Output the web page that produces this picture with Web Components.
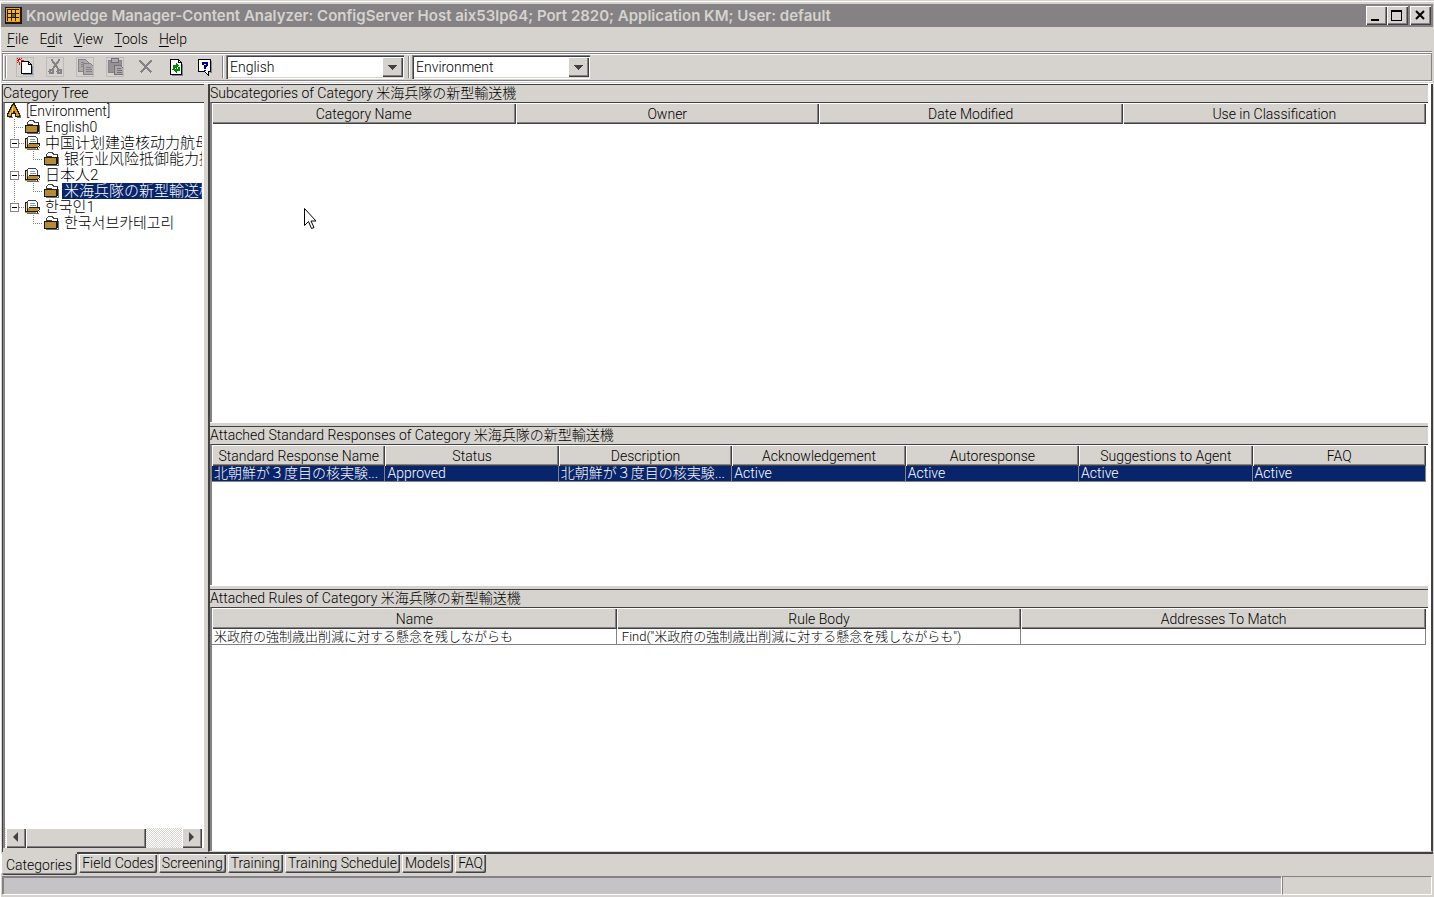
<!DOCTYPE html>
<html lang="en">
<head>
<meta charset="utf-8">
<title>Knowledge Manager-Content Analyzer</title>
<style>
    :root {
        --face: #d6d3ce;
        --light: #ffffff;
        --shadow: #848284;
        --dark: #424142;
        --select: #08246b;
        --raised: inset 1px 1px var(--light), inset -1px -1px var(--dark), inset -2px -2px var(--shadow);
    }
    html, body { height: 100%; }
    body {
        margin: 0;
        background: var(--face);
        color: #000;
        font: 300 14px/16px Roboto, "Noto Sans CJK JP", sans-serif;
        overflow: hidden;
    }
</style>
</head>
<body>
<km-app></km-app>

<script>
class KmTitlebar extends HTMLElement {
    connectedCallback() {
        this.attachShadow({ mode: 'open' });
        this.shadowRoot.innerHTML = `
            <style>
                :host {
                    display: flex;
                    align-items: center;
                    height: 23px;
                    padding: 0 2px 0 4px;
                    background: var(--shadow);
                    color: var(--face);
                }
                h1 {
                    flex: 1;
                    margin: 0 0 0 4px;
                    font: 600 15px/20px Inter, sans-serif;
                    white-space: nowrap;
                    overflow: hidden;
                }
                svg { display: block; }
                button {
                    width: 21px;
                    height: 19px;
                    padding: 0;
                    border: 0;
                    background: var(--face);
                    box-shadow: var(--raised);
                }
                .close { margin-left: 2px; }
            </style>
            <svg width="17" height="17" shape-rendering="crispEdges">
                <rect width="17" height="17" fill="#211800"/>
                <path d="M1.500 1.500h13v13h-13z" fill="none" stroke="#e7a221"/>
                <path d="M3 3h3v3h-3zM7 3h3v3h-3zM11 3h3v3h-3zM3 7h3v3h-3zM11 7h3v3h-3zM3 11h3v3h-3zM7 11h3v3h-3zM11 11h3v3h-3z" fill="#ffb629"/>
                <path d="M7 7h3v3h-3z" fill="#63655a"/>
            </svg>
            <h1><slot></slot></h1>
            <button aria-label="Minimize"><svg width="21" height="19"><path d="M5 13h8v2h-8z"/></svg></button>
            <button aria-label="Maximize"><svg width="21" height="19"><path d="M4 4h11v11h-11zM5 6v8h9v-8z" fill-rule="evenodd"/></svg></button>
            <button aria-label="Close" class="close"><svg width="21" height="19"><path d="M6 5l8 8M14 5l-8 8" stroke="#000" stroke-width="2"/></svg></button>
        `;
    }
}
customElements.define('km-titlebar', KmTitlebar);

class KmMenubar extends HTMLElement {
    connectedCallback() {
        const items = this.getAttribute('items').split(',');
        this.attachShadow({ mode: 'open' });
        this.shadowRoot.innerHTML = `
            <style>
                :host { display: flex; gap: 11px; height: 24px; padding: 0 6px; align-items: center; }
                button { padding: 0; border: 0; background: none; font: inherit; color: inherit; }
                u { text-underline-offset: 2px; }
            </style>
            ${items.map(i => `<button>${i.replace(/_(.)/, '<u>$1</u>')}</button>`).join('')}
        `;
    }
}
customElements.define('km-menubar', KmMenubar);

class KmCombo extends HTMLElement {
    connectedCallback() {
        this.attachShadow({ mode: 'open' });
        this.shadowRoot.innerHTML = `
            <style>
                :host { display: block; position: relative; width: 178px; margin-right: 2px; }
                select {
                    appearance: none;
                    display: block;
                    width: 100%;
                    height: 24px;
                    padding: 0 24px 0 4px;
                    border: 0;
                    border-radius: 0;
                    background: #fff;
                    box-shadow: inset 1px 1px var(--shadow), inset 2px 2px var(--dark), inset -1px -1px #fff, inset -2px -2px var(--face);
                    font: inherit;
                    color: inherit;
                }
                svg {
                    position: absolute;
                    right: 1px;
                    top: 2px;
                    background: var(--face);
                    box-shadow: var(--raised);
                    pointer-events: none;
                }
            </style>
            <select aria-label="${this.getAttribute('label')}"><option>${this.getAttribute('value')}</option></select>
            <svg width="21" height="20" shape-rendering="crispEdges"><path d="M5 8h10l-5 5z" fill="#424142"/></svg>
        `;
    }
}
customElements.define('km-combo', KmCombo);

const TOOLS = [
    ['New', false, `<path d="M5 4h7l3 3v9h-10z" fill="#fff" stroke="#000"/><path d="M12 4v3h3" fill="none" stroke="#000"/><path d="M16 8v9h-10" fill="none" stroke="#7b8aa5"/><path d="M3 0v7M0 3h7M1 1l5 5M5 1l-5 5" stroke="#f00"/><rect x="2" y="2" width="2" height="2" fill="#fff"/>`],
    ['Cut', true, `<path d="M5 2l7 10M13 2l-7 10" stroke="#848284" stroke-width="2"/><circle cx="5" cy="14" r="2" fill="none" stroke="#848284" stroke-width="2"/><circle cx="13" cy="14" r="2" fill="none" stroke="#848284" stroke-width="2"/>`],
    ['Copy', true, `<path d="M2 2h7l3 3v9h-10z" fill="#adaaad" stroke="#848284"/><path d="M7 6h7l3 3v8h-10z" fill="#adaaad" stroke="#848284"/><path d="M4 5h3M4 7h3M4 9h2M9 10h5M9 12h6M9 14h6" stroke="#848284"/>`],
    ['Paste', true, `<path d="M2 3h13v12h-13z" fill="#949294" stroke="#848284"/><path d="M5 1h7v4h-7z" fill="#adaaad" stroke="#737173"/><path d="M8 8h6l3 3v6h-9z" fill="#adaaad" stroke="#737173"/><path d="M10 11h4M10 13h5M10 15h5" stroke="#737173"/>`],
    ['Delete', true, `<path d="M3 3l12 12M15 3l-11 12" stroke="#848284" stroke-width="2"/>`],
    ['Refresh', false, `<path d="M4 2h8l3 3v12h-11z" fill="#fff" stroke="#000"/><path d="M12 2v3h3" fill="none" stroke="#000"/><path d="M5 18h11v-12" fill="none" stroke="#7b8aa5"/><path d="M7 11v-3h2M12 9v3h-2" fill="none" stroke="#008a00" stroke-width="2"/><path d="M9 5l4 3-4 3zM10 9v6l-4-3z" fill="#008a00"/>`],
    ['Help', false, `<path d="M2 2h12v12h-2v4l-4-4h-6z" fill="#fff" stroke="#000"/><path d="M15 3v12h-2" fill="none" stroke="#7b8aa5"/><path d="M6 7v-2h4v3l-2 1v2" fill="none" stroke="#00008c" stroke-width="2"/><rect x="7" y="12" width="2" height="1" fill="#00008c"/>`]
];

class KmToolbar extends HTMLElement {
    connectedCallback() {
        this.attachShadow({ mode: 'open' });
        this.shadowRoot.innerHTML = `
            <style>
                :host {
                    display: flex;
                    align-items: center;
                    height: 26px;
                    margin: 0 1px;
                    border: 1px solid var(--shadow);
                    box-shadow: inset 1px 1px #fff, 0 1px #fff, 0 -1px #fff, 0 -2px var(--shadow);
                }
                i { width: 1px; height: 22px; margin: 0 2px; border-left: 1px solid var(--shadow); background: #fff; }
                button { width: 30px; height: 22px; padding: 0; border: 0; background: none; display: grid; place-items: center; }
                .boxed svg { outline: 1px solid #bdbabd; outline-offset: -1px; }
                .tools { display: flex; padding-left: 1px; }
            </style>
            <i></i>
            <div class="tools">
                ${TOOLS.map(([name, off, art], n) => `<button aria-label="${name}" class="${n < 4 ? 'boxed' : ''}" ${off ? 'disabled' : ''}>
                    <svg width="18" height="20" viewBox="-.5 -.5 18 20" shape-rendering="crispEdges">${art}</svg></button>`).join('')}
            </div>
            <i></i>
            <km-combo label="Language" value="English"></km-combo>
            <i></i>
            <km-combo label="Scope" value="Environment"></km-combo>
        `;
    }
}
customElements.define('km-toolbar', KmToolbar);

const FOLDER = `<path d="M3 5v-2l2-2h4l1 2h4v3z" fill="#fff" stroke="#424142"/><path d="M1 6h12v7h-12z" fill="#b58a39" stroke="#211800"/><path d="M13 5l1-1v8" fill="none" stroke="#211800"/><path d="M2 14h13v-9" fill="none" stroke="#5a6d8c"/>`;
const OPENED = `<path d="M1 3h3v9h-3z" fill="#ffcf9c" stroke="#211800"/><path d="M3 2l1-1h7l2 2v6h-10z" fill="#fff" stroke="#424142"/><path d="M5 4h5M5 6h6" stroke="#6b9ace"/><path d="M4 8h11l-3 5h-11z" fill="#b58a39"/><path d="M4 8h11M15 8v2M14 10v1M13 11v2M1 12h12M3 9v2M2 11v1" stroke="#211800" fill="none"/><path d="M2 14h12M15 12v-1" stroke="#5a6d8c"/>`;
const ROOT = `<path d="M8 0h1v2h1v2h1v2h1v2h1v2h1v3h-4v-3h-1v-2h-1v2h-2v3h-4v-3h1v-2h1v-2h1v-2h1v-2h1z" fill="#de9a10" stroke="#211800"/><path d="M7 3v5M5 8v3" stroke="#ffcf4a"/><path d="M3 14h4M11 14h4v-3" fill="none" stroke="#5a6d8c"/>`;

// depth, open state, language, label
const NODES = [
    [0, 'root', 'en', '[Environment]'],
    [1, 'leaf', 'en', 'English0'],
    [1, 'open', 'zh', '中国计划建造核动力航母'],
    [2, 'leaf', 'zh', '银行业风险抵御能力提'],
    [1, 'open', 'ja', '日本人2'],
    [2, 'leaf', 'ja', '米海兵隊の新型輸送機', true],
    [1, 'last', 'ko', '한국인1'],
    [2, 'end', 'ko', '한국서브카테고리']
];

class KmTree extends HTMLElement {
    cell(body) {
        return `<svg width="19" height="16" shape-rendering="crispEdges">${body}</svg>`;
    }
    guides(depth, kind) {
        const dots = d => `<path d="${d}" stroke="#848284" stroke-dasharray="1 1" fill="none"/>`;
        if (depth === 0) return '';
        if (depth === 2) {
            return this.cell(kind === 'end' ? '' : dots('M9.5 0v16')) + this.cell(dots('M9.5 0v8.5h10'));
        }
        if (kind === 'leaf') return this.cell(dots('M9.5 0v16') + dots('M9 8.5h10'));
        return this.cell(dots(kind === 'last' ? 'M9.5 0v4' : 'M9.5 0v16') + dots('M14 8.5h5') +
            '<path d="M5.5 4.5h8v8h-8z" fill="#fff" stroke="#848284"/><path d="M7 8.5h5" stroke="#000"/>');
    }
    connectedCallback() {
        const icon = { root: ROOT, leaf: FOLDER, end: FOLDER, open: OPENED, last: OPENED };
        this.attachShadow({ mode: 'open' });
        this.shadowRoot.innerHTML = `
            <style>
                :host { display: flex; flex-direction: column; flex: 1; min-height: 0; }
                ul { flex: 1; margin: 0; padding: 0; list-style: none; overflow: hidden; }
                li { display: flex; height: 16px; line-height: 16px; white-space: nowrap; }
                svg { flex: none; display: block; }
                span { padding: 0 2px; }
                :lang(zh), :lang(ja), :lang(ko) { font-size: 15px; }
                :lang(zh) { font-family: Roboto, "Noto Sans CJK SC", sans-serif; }
                :lang(ko) { font-family: Roboto, "Noto Sans CJK KR", sans-serif; }
                .on span { background: var(--select); color: #fff; }
            </style>
            <ul role="tree">
                ${NODES.map(([depth, kind, lang, label, on]) => `<li role="treeitem" lang="${lang}" class="${on ? 'on' : ''}">${
                    this.guides(depth, kind)}${this.cell(`<g transform="translate(.5 .5)">${icon[kind]}</g>`)}<span>${label}</span></li>`).join('')}
            </ul>
            <km-scrollbar></km-scrollbar>
        `;
    }
}
customElements.define('km-tree', KmTree);

class KmScrollbar extends HTMLElement {
    connectedCallback() {
        this.attachShadow({ mode: 'open' });
        this.shadowRoot.innerHTML = `
            <style>
                :host {
                    display: flex;
                    height: 20px;
                    padding-left: 1px;
                    background: repeating-conic-gradient(#fff 0 25%, var(--face) 0 50%) 0 0 / 2px 2px;
                }
                button { width: 20px; padding: 0; border: 0; background: var(--face); box-shadow: var(--raised); }
                svg { display: block; }
                .thumb { width: 61%; background: var(--face); box-shadow: var(--raised); }
                .right { margin-left: auto; }
            </style>
            <button aria-label="Scroll left"><svg width="20" height="20"><path d="M12 4v10l-5-5z" fill="#424142"/></svg></button>
            <div class="thumb"></div>
            <button class="right" aria-label="Scroll right"><svg width="20" height="20"><path d="M7 4v10l5-5z" fill="#424142"/></svg></button>
        `;
    }
}
customElements.define('km-scrollbar', KmScrollbar);

// A titled pane with a sunken white client area
class KmPane extends HTMLElement {
    connectedCallback() {
        this.attachShadow({ mode: 'open' });
        this.shadowRoot.innerHTML = `
            <style>
                :host { display: flex; flex-direction: column; min-height: 0; min-width: 0; }
                h2 {
                    margin: 0;
                    height: 17px;
                    line-height: 17px;
                    font-size: 14px;
                    font-weight: inherit;
                    white-space: nowrap;
                    background: var(--face);
                }
                .client {
                    flex: 1;
                    display: flex;
                    flex-direction: column;
                    min-height: 0;
                    padding-right: 2px;
                    border-top: 1px solid var(--dark);
                    border-left: 2px solid var(--shadow);
                    background: #fff;
                }
            </style>
            <h2><slot name="title"></slot></h2>
            <div class="client"><slot></slot></div>
        `;
    }
}
customElements.define('km-pane', KmPane);

class KmTable extends HTMLElement {
    connectedCallback() {
        const cols = this.getAttribute('columns').split('|');
        const cells = this.hasAttribute('row') ? this.getAttribute('row').split('|') : null;
        this.attachShadow({ mode: 'open' });
        this.shadowRoot.innerHTML = `
            <style>
                :host { display: block; }
                table { width: 100%; table-layout: fixed; border-spacing: 0; }
                th {
                    height: 21px;
                    padding: 0;
                    font-weight: inherit;
                    background: var(--face);
                    box-shadow: inset 1px 1px #fff, inset -1px -1px var(--dark), inset -2px -2px var(--shadow);
                    white-space: nowrap;
                }
                td {
                    height: 15px;
                    line-height: 15px;
                    padding: 0 1px 0 2px;
                    border-right: 1px solid var(--shadow);
                    border-bottom: 1px solid var(--shadow);
                    white-space: pre;
                    overflow: hidden;
                    font-size: var(--cell-size, 14px);
                }
                :host([selected]) td { background: var(--select); color: #fff; }
            </style>
            <table>
                <thead><tr>${cols.map(c => `<th scope="col">${c}</th>`).join('')}</tr></thead>
                ${cells ? `<tbody><tr>${cells.map(c => `<td>${c}</td>`).join('')}</tr></tbody>` : ''}
            </table>
        `;
    }
}
customElements.define('km-table', KmTable);

class KmTabs extends HTMLElement {
    connectedCallback() {
        const tabs = this.getAttribute('tabs').split(',');
        this.attachShadow({ mode: 'open' });
        this.shadowRoot.innerHTML = `
            <style>
                :host { display: flex; align-items: flex-start; gap: 2px; height: 22px; }
                button {
                    height: 19px;
                    padding: 0 3px 2px;
                    border: 0;
                    border-radius: 0 0 2px 2px;
                    background: var(--face);
                    box-shadow: var(--raised);
                    font: inherit;
                    color: inherit;
                }
                [aria-selected=true] {
                    height: 21px;
                    padding: 0 5px;
                    box-shadow: inset 1px 0 #fff, inset -1px -1px var(--dark), inset -2px -2px var(--shadow), 0 -2px var(--face);
                }
            </style>
            ${tabs.map((t, i) => `<button role="tab" aria-selected="${i === 0}">${t}</button>`).join('')}
        `;
    }
}
customElements.define('km-tabs', KmTabs);

class KmStatusbar extends HTMLElement {
    connectedCallback() {
        this.attachShadow({ mode: 'open' });
        this.shadowRoot.innerHTML = `
            <style>
                :host { display: flex; height: 19px; margin: 0 1px 2px; }
                div { border: solid; border-width: 1px; border-color: var(--shadow) #fff #fff var(--shadow); box-sizing: border-box; }
                .message { flex: 1; background: #c6c3c6; box-shadow: inset 1px 1px var(--shadow); }
                .side { width: 150px; }
            </style>
            <div class="message"></div>
            <div class="side"></div>
        `;
    }
}
customElements.define('km-statusbar', KmStatusbar);

class KmApp extends HTMLElement {
    connectedCallback() {
        this.attachShadow({ mode: 'open' });
        this.shadowRoot.innerHTML = `
            <style>
                :host {
                    display: flex;
                    flex-direction: column;
                    height: 100%;
                    box-sizing: border-box;
                    padding: 4px 1px 0;
                    box-shadow: inset 0 1px var(--face), inset 1px 2px #fff;
                }
                km-toolbar { margin-top: 2px; }
                main {
                    flex: 1;
                    display: flex;
                    gap: 4px;
                    min-height: 0;
                    margin-top: 2px;
                    padding-left: 1px;
                    border-top: 1px solid #fff;
                    border-bottom: 2px solid var(--dark);
                }
                .tree { width: 201px; padding-bottom: 4px; border-left: 1px solid var(--dark); border-top: 1px solid var(--dark); }
                .right {
                    flex: 1;
                    display: flex;
                    flex-direction: column;
                    min-width: 0;
                    background: #fff;
                    border-left: 2px solid var(--dark);
                    border-right: 2px solid var(--dark);
                    border-bottom: 1px solid var(--face);
                }
                .right km-pane { margin-right: 3px; border-top: 1px solid var(--dark); }
                .right km-pane + km-pane { box-shadow: 0 -3px var(--face); margin-top: 4px; }
                .subs { flex: 337; }
                .responses { flex: 158; }
                .rules { flex: 261; --cell-size: 13px; }
                .cursor { position: absolute; left: 304px; top: 208px; }
            </style>
            <km-titlebar>Knowledge Manager-Content Analyzer: ConfigServer Host aix53lp64; Port 2820; Application KM; User: default</km-titlebar>
            <km-menubar items="_File,E_dit,_View,_Tools,_Help"></km-menubar>
            <km-toolbar></km-toolbar>
            <main>
                <km-pane class="tree">
                    <span slot="title">Category Tree</span>
                    <km-tree></km-tree>
                </km-pane>
                <div class="right">
                    <km-pane class="subs">
                        <span slot="title">Subcategories of Category 米海兵隊の新型輸送機</span>
                        <km-table columns="Category Name|Owner|Date Modified|Use in Classification"></km-table>
                    </km-pane>
                    <km-pane class="responses">
                        <span slot="title">Attached Standard Responses of Category 米海兵隊の新型輸送機</span>
                        <km-table selected columns="Standard Response Name|Status|Description|Acknowledgement|Autoresponse|Suggestions to Agent|FAQ"
                            row="北朝鮮が３度目の核実験...|Approved|北朝鮮が３度目の核実験...|Active|Active|Active|Active"></km-table>
                    </km-pane>
                    <km-pane class="rules">
                        <span slot="title">Attached Rules of Category 米海兵隊の新型輸送機</span>
                        <km-table columns="Name|Rule Body|Addresses To Match"
                            row='米政府の強制歳出削減に対する懸念を残しながらも| Find("米政府の強制歳出削減に対する懸念を残しながらも")|'></km-table>
                    </km-pane>
                </div>
            </main>
            <km-tabs tabs="Categories,Field Codes,Screening,Training,Training Schedule,Models,FAQ"></km-tabs>
            <km-statusbar></km-statusbar>
            <svg class="cursor" width="13" height="22"><path d="M.5 .5v17l4-4 3 7 2.500-1-3-6.500h5z" fill="#fff" stroke="#000"/></svg>
        `;
    }
}
customElements.define('km-app', KmApp);
</script>
</body>
</html>
